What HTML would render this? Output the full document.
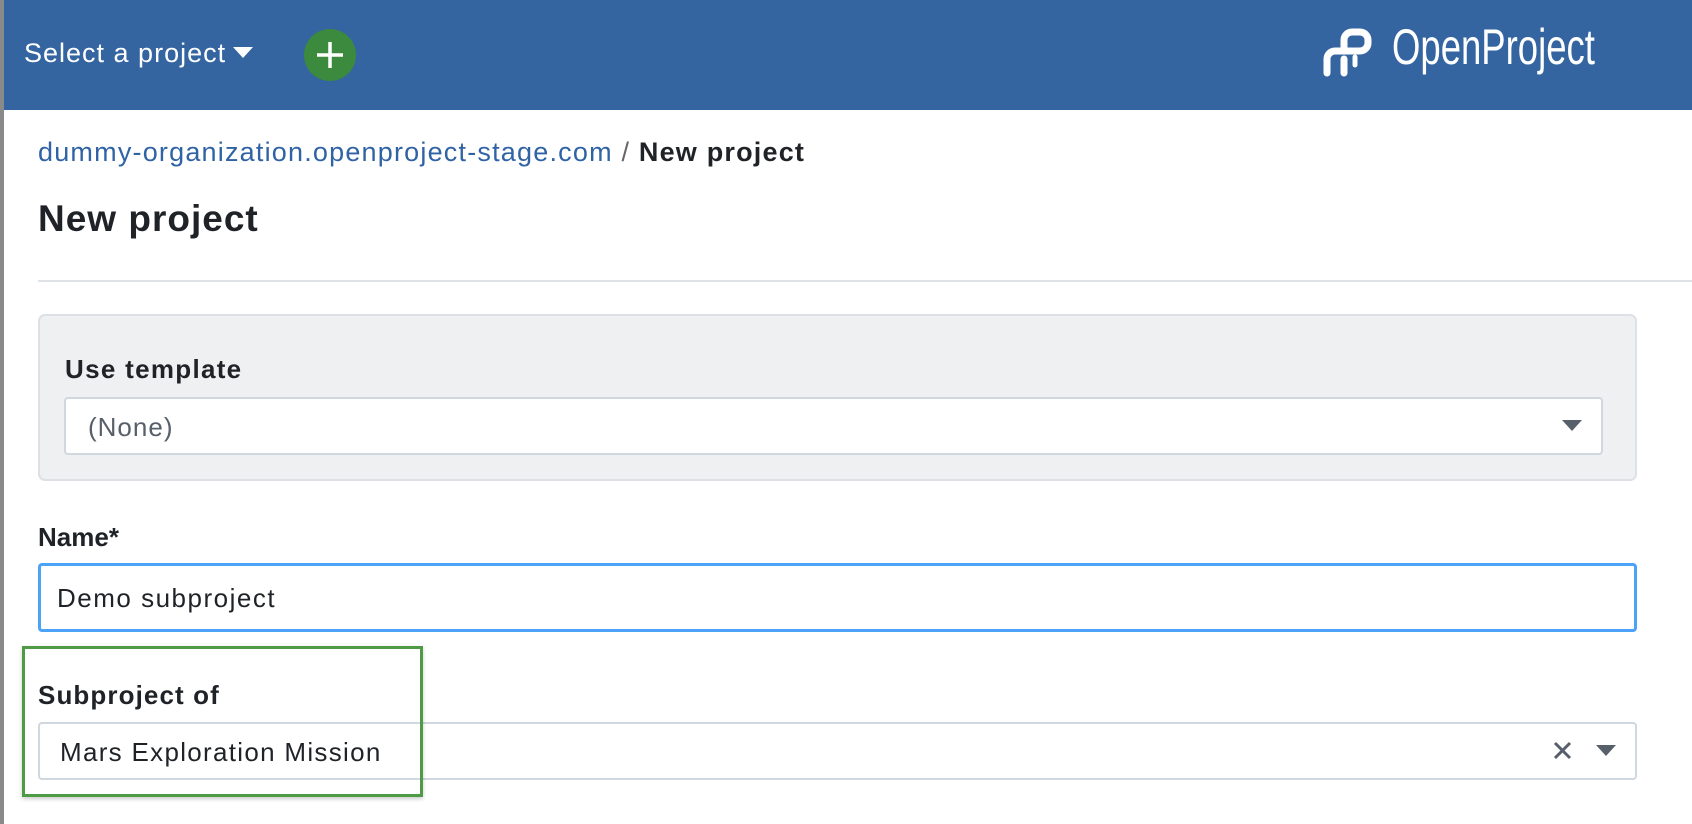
<!DOCTYPE html>
<html><head><meta charset="utf-8"><style>
*{box-sizing:border-box;margin:0;padding:0}
body{width:1692px;height:824px;overflow:hidden;background:#fff;font-family:"Liberation Sans",sans-serif;color:#1f2328;position:relative}
.abs{position:absolute;white-space:nowrap}
.hdr{left:0;top:0;width:1692px;height:110px;background:#3465a0}
.strip{left:0;top:0;width:4px;height:824px;background:#8a8a8a}
.lbl{font-weight:bold;font-size:26px;line-height:1;color:#1f2328}
.inp{background:#fff;border:2px solid #d0d7de;border-radius:4px}
</style></head><body>
<div class="abs hdr"></div>
<div class="abs strip"></div>
<div class="abs" style="left:24px;top:40px;font-size:27px;color:#fff;line-height:1;letter-spacing:1px">Select a project</div>
<svg class="abs" style="left:233px;top:47px" width="20" height="12"><polygon points="0,0 20,0 10,11" fill="#fff"/></svg>
<div class="abs" style="left:304px;top:29px;width:52px;height:52px;border-radius:50%;background:#3b8a3e"></div>
<svg class="abs" style="left:304px;top:29px" width="52" height="52"><path d="M26 13V39M13 26H39" stroke="#fff" stroke-width="3.5"/></svg>
<svg class="abs" style="left:1322px;top:27px" width="56" height="52" viewBox="0 0 56 52"><g fill="none" stroke="#fff" stroke-width="7" stroke-linecap="round" stroke-linejoin="round"><path d="M5 46V32a8 8 0 0 1 8-8h18"/><path d="M22 46V32"/><path d="M22 24V13a8 8 0 0 1 8-8h8a8 8 0 0 1 8 8v3a8 8 0 0 1-8 8h-5"/></g><path d="M33 30v8" stroke="#fff" stroke-width="5" stroke-linecap="round"/></svg>
<div class="abs" style="left:1392px;top:22px;font-size:50px;color:#fff;line-height:1;transform:scaleX(0.73);transform-origin:0 0">OpenProject</div>
<div class="abs" style="left:38px;top:139px;font-size:27px;line-height:1;letter-spacing:1.2px"><span style="color:#2f63a5">dummy-organization.openproject-stage.com</span> <span style="color:#666">/</span> <b style="color:#1f2328">New project</b></div>
<div class="abs" style="left:38px;top:200px;font-size:37px;font-weight:bold;line-height:1;letter-spacing:1px">New project</div>
<div class="abs" style="left:38px;top:280px;width:1654px;height:2px;background:#dfe3e8"></div>
<div class="abs" style="left:38px;top:314px;width:1599px;height:167px;background:#eff0f2;border:2px solid #dde0e4;border-radius:7px"></div>
<div class="abs lbl" style="left:65px;top:356px;letter-spacing:1.3px">Use template</div>
<div class="abs inp" style="left:64px;top:397px;width:1539px;height:58px"></div>
<div class="abs" style="left:88px;top:414px;font-size:26px;line-height:1;color:#57606a;letter-spacing:1px">(None)</div>
<svg class="abs" style="left:1562px;top:420px" width="20" height="11"><polygon points="0,0 20,0 10,11" fill="#57606a"/></svg>
<div class="abs lbl" style="left:38px;top:524px">Name*</div>
<div class="abs" style="left:38px;top:563px;width:1599px;height:69px;border:3px solid #4ca2f7;border-radius:4px"></div>
<div class="abs" style="left:57px;top:585px;font-size:26px;line-height:1;letter-spacing:1.5px">Demo subproject</div>
<div class="abs lbl" style="left:38px;top:682px;letter-spacing:1.1px">Subproject of</div>
<div class="abs inp" style="left:38px;top:722px;width:1599px;height:58px"></div>
<div class="abs" style="left:60px;top:739px;font-size:26px;line-height:1;letter-spacing:1.3px">Mars Exploration Mission</div>
<svg class="abs" style="left:1553px;top:741px" width="19" height="19"><path d="M2 2L17 17M17 2L2 17" stroke="#57606a" stroke-width="3"/></svg>
<svg class="abs" style="left:1596px;top:745px" width="20" height="11"><polygon points="0,0 20,0 10,11" fill="#57606a"/></svg>
<div class="abs" style="left:22px;top:646px;width:401px;height:151px;border:3px solid #4f9a45;box-shadow:0 2px 4px rgba(0,0,0,.2)"></div>
</body></html>
